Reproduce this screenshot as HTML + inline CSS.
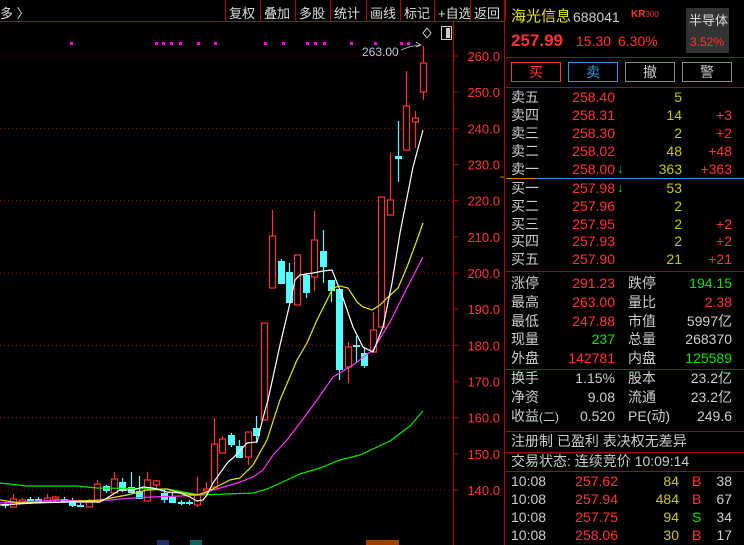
<!DOCTYPE html>
<html><head><meta charset="utf-8">
<style>
*{margin:0;padding:0;box-sizing:border-box}
body{width:744px;height:545px;background:#000;overflow:hidden;position:relative;font-family:"Liberation Sans","Noto Sans CJK SC",sans-serif;color:#ccc}
.a{position:absolute;white-space:nowrap;line-height:1}
.r{color:#ff3333}.y{color:#c8c800}.g{color:#00e600}.w{color:#ccc}
.tb{position:absolute;top:3px;font-size:13px;color:#ddd}
.hl{position:absolute;height:1px;background:#b00000;left:506px;width:238px}
.btn{position:absolute;top:62px;height:20px;width:50px;border:1px solid #888;font-size:14px;text-align:center;line-height:18px}
</style></head><body>
<div style="position:absolute;left:0;top:21px;width:505px;height:1px;background:#b00000"></div>
<div class="tb" style="left:0">多 〉</div>
<div id="tbs"></div>
<svg id="ch" width="505" height="545" style="position:absolute;left:0;top:0"></svg>
<div style="position:absolute;left:504px;top:0;width:1px;height:545px;background:#b00000"></div>
<div class="a" style="left:511px;top:9px;font-size:15px;color:#e6e600">海光信息</div>
<div class="a" style="left:573px;top:10px;font-size:14px;color:#ccc">688041</div>
<div class="a r" style="left:631px;top:10px;font-size:10px;font-weight:bold">KR<span style="font-weight:normal;font-size:8px">300</span></div>
<div style="position:absolute;left:686px;top:8px;width:43px;height:45px;background:#333"></div>
<div class="a" style="left:689px;top:14px;font-size:13px;color:#ddd">半导体</div>
<div class="a r" style="left:690px;top:36px;font-size:12px">3.52%</div>
<div class="a r" style="left:511px;top:32px;font-size:17px;font-weight:bold">257.99</div>
<div class="a r" style="left:576px;top:34px;font-size:14px">15.30</div>
<div class="a r" style="left:618px;top:34px;font-size:14px">6.30%</div>
<div class="hl" style="top:57px"></div>
<div class="btn r" style="left:511px;border-color:#ff3333">买</div>
<div class="btn" style="left:568px;border-color:#3a8fd8;color:#3a8fd8">卖</div>
<div class="btn" style="left:625px">撤</div>
<div class="btn" style="left:682px">警</div>
<div class="hl" style="top:87px"></div>
<div style="position:absolute;left:506px;top:178px;width:30px;height:1px;background:#d08000"></div>
<div style="position:absolute;left:536px;top:178px;width:208px;height:1px;background:#3a8fd8"></div>
<div class="hl" style="top:271px"></div>
<div class="hl" style="top:369px"></div>
<div class="hl" style="top:431px"></div>
<div class="hl" style="top:452px"></div>
<div class="hl" style="top:471px"></div>
<div id="rp"></div>
<script>
var s='';
var tb=[['复权',225],['叠加',260],['多股',295],['统计',330],['画线',366],['标记',400],['+自选',434],['返回',470]];
tb.forEach(function(t){s+='<div style="position:absolute;left:'+t[1]+'px;top:0;width:1px;height:21px;background:#b00000"></div><div class="tb" style="left:'+(t[1]+4)+'px">'+t[0]+'</div>';});
s+='<div style="position:absolute;left:505px;top:0;width:1px;height:21px;background:#b00000"></div>';
document.getElementById('tbs').innerHTML=s;
var h='';
function T(x,y,t,c,al,fs){fs=fs||14;if(al)h+='<div class="a '+c+'" style="right:'+(744-x)+'px;top:'+(y-fs/2)+'px;font-size:'+fs+'px">'+t+'</div>';else h+='<div class="a '+c+'" style="left:'+x+'px;top:'+(y-fs/2)+'px;font-size:'+fs+'px">'+t+'</div>';}
var ob=[['卖五','258.40','5',''],['卖四','258.31','14','+3'],['卖三','258.30','2','+2'],['卖二','258.02','48','+48'],['卖一','258.00','363','+363'],['买一','257.98','53',''],['买二','257.96','2',''],['买三','257.95','2','+2'],['买四','257.93','2','+2'],['买五','257.90','21','+21']];
ob.forEach(function(o,i){var y=i<5?97+i*18:188+(i-5)*17.8;T(511,y,o[0],'w');T(615,y,o[1],'r',1);T(682,y,o[2],'y',1);T(732,y,o[3],'r',1);if(i==4||i==5)h+='<div class="a g" style="left:617px;top:'+(y-7)+'px;font-size:13px;font-weight:bold">↓</div>';});
var st=[['涨停','291.23','r','跌停','194.15','g'],['最高','263.00','r','量比','2.38','r'],['最低','247.88','r','市值','5997亿','w'],['现量','237','g','总量','268370','w'],['外盘','142781','r','内盘','125589','g']];
st.forEach(function(o,i){var y=283+i*18.8;T(511,y,o[0],'w');T(615,y,o[1],o[2],1);T(628,y,o[3],'w');T(732,y,o[4],o[5],1);});
var st2=[['换手','1.15%','股本','23.2亿'],['净资','9.08','流通','23.2亿'],['收益<span style="font-size:12px">(二)</span>','0.520','PE(动)','249.6']];
st2.forEach(function(o,i){var y=378+i*19;T(511,y,o[0],'w');T(615,y,o[1],'w',1);T(628,y,o[2],'w');T(732,y,o[3],'w',1);});
T(511,441,'注册制 已盈利 表决权无差异','w');
T(511,461,'交易状态: 连续竞价 10:09:14','w');
var tr=[['257.62','84','B','38'],['257.94','484','B','67'],['257.75','94','S','34'],['258.06','30','B','17']];
tr.forEach(function(o,i){var y=481+i*18;T(511,y,'10:08','w');T(618,y,o[0],'r',1);T(679,y,o[1],'y',1);T(692,y,o[2],o[2]=='B'?'r':'g');T(732,y,o[3],'w',1);});
document.getElementById('rp').innerHTML=h;
var g='';
function Y(p){return 56+(260-p)*3.617;}
for(var p=260;p>=140;p-=20){var y=Y(p);g+='<line x1="0" y1="'+y+'" x2="453" y2="'+y+'" stroke="#b00000" stroke-dasharray="1,3"/>';}
g+='<line x1="453.5" y1="22" x2="453.5" y2="545" stroke="#c00000"/>';
for(var p=260;p>=140;p-=10){var y=Y(p);g+='<line x1="453" y1="'+y+'" x2="458" y2="'+y+'" stroke="#c00000"/><text x="500" y="'+(y+5)+'" fill="#ff3333" font-size="13" text-anchor="end" font-family="Liberation Sans">'+p.toFixed(1)+'</text>';}
g+='<line x1="500" y1="177" x2="505" y2="177" stroke="#d08000"/>';
var C=[[423,46,100,63,92,1],[415,111,148,118,122,1],[406,71,150,106,150,1],[398,121,182,156,158,0],[390,153,215,200,215,1],[381,197,327,197,327,1],[373,312,352,330,352,1],[364,347,368,353,365,0],[356,336,363,345,346,0],[348,342,383,347,367,1],[339,289,380,289,369,0],[331,280,302,280,290,0],[323,230,283,251,266,0],[314,211,291,240,277,1],[306,273,298,275,292,0],[297,255,305,255,305,1],[289,263,303,272,302,0],[281,259,284,261,283,0],[272,210,288,236,288,1],[264,323,420,323,420,1],[256,416,443,428,435,0],[248,432,465,432,457,1],[239,440,457,446,457,0],[231,433,447,435,444,0],[222,436,453,439,453,1],[214,418,487,444,487,1],[206,482,495,489,491,1],[197,477,507,495,505,1],[189,500,505,502,503,0],[181,500,505,502,503,0],[172,493,503,497,502,0],[164,490,503,493,499,0],[156,480,488,481,485,1],[147,472,501,480,501,1],[139,476,499,491,498,0],[131,472,492,487,492,0],[122,478,492,482,490,0],[114,472,493,479,493,1],[106,485,493,486,490,0],[97,480,503,484,501,1],[89,499,507,502,507,1],[80,503,507,505,506,0],[72,498,507,500,505,0],[64,497,503,499,501,0],[55,496,502,497,499,1],[47,494,502,498,502,1],[38,497,503,499,501,0],[30,497,504,499,502,0],[22,498,504,500,502,1],[13,494,507,499,507,1],[5,502,508,504,505,0]];
C.forEach(function(c){var x=c[0],col=c[5]?'#ff3333':'#54ffff';g+='<line x1="'+(x+.5)+'" y1="'+c[1]+'" x2="'+(x+.5)+'" y2="'+c[2]+'" stroke="'+col+'" stroke-width="1.2"/>';var bh=Math.max(c[4]-c[3],1);if(c[5])g+='<rect x="'+(x-2.5)+'" y="'+c[3]+'" width="6" height="'+bh+'" fill="#000" stroke="'+col+'" stroke-width="1.2"/>';else g+='<rect x="'+(x-3)+'" y="'+c[3]+'" width="7" height="'+(bh+1)+'" fill="'+col+'"/>';});
function L(pts,col){g+='<polyline fill="none" stroke="'+col+'" stroke-width="1.2" points="'+pts+'"/>';}
L('0,483 27,486 77,486 97,488 167,489 200,495 227,494 253,493 267,489 287,480 300,474 320,468 340,460 360,455 390,441 410,426 423,411','#00e600');
L('0,503 60,500 90,501 110,500 133,498 153,497 180,496 200,495 213,490 227,486 240,482 253,477 263,470 273,455 287,440 300,423 317,400 333,377 353,365 373,350 390,322 407,288 423,257','#ff33ff');
L('0,500 20,503 60,502 100,500 127,495 147,490 167,489 177,492 187,494 197,495 207,492 220,485 230,480 240,478 253,465 267,440 280,400 297,360 307,343 317,320 327,300 333,288 340,286 348,288 357,302 363,307 372,310 380,305 387,298 398,288 407,267 417,240 423,223','#e6e600');
L('0,505 33,503 67,502 100,502 107,498 120,490 133,490 143,487 153,488 167,492 180,493 190,497 197,501 203,500 207,495 213,483 228,462 233,458 247,443 257,442 263,418 268,400 280,345 290,303 295,280 300,275 313,273 323,271 332,270 343,298 353,327 363,347 373,352 383,327 392,283 400,233 413,167 423,130','#ffffff');
[70,155,162,170,179,197,214,264,282,306,314,323,350,374,400,407].forEach(function(x){g+='<rect x="'+x+'" y="42" width="3" height="3" fill="#ff00ff"/>';});
g+='<text x="362" y="56" fill="#b8c8d8" font-size="12" font-family="Liberation Sans">263.00</text><path d="M401,50 Q410,46 420,45 M416,42 L421,45 L416,47" stroke="#ccc" fill="none" stroke-width="0.8"/>';
g+='<path d="M427,28 L431,33 L427,38 L423,33Z" stroke="#ccc" fill="none"/><rect x="441.5" y="26.5" width="10" height="13" stroke="#ccc" fill="none"/><rect x="446" y="28" width="4" height="10" fill="#ccc"/>';
g+='<rect x="157" y="540" width="12" height="5" fill="#203060"/><rect x="190" y="540" width="12" height="5" fill="#106060"/><rect x="366" y="540" width="33" height="5" fill="#a04000"/>';
document.getElementById('ch').innerHTML=g;
</script>
</body></html>
